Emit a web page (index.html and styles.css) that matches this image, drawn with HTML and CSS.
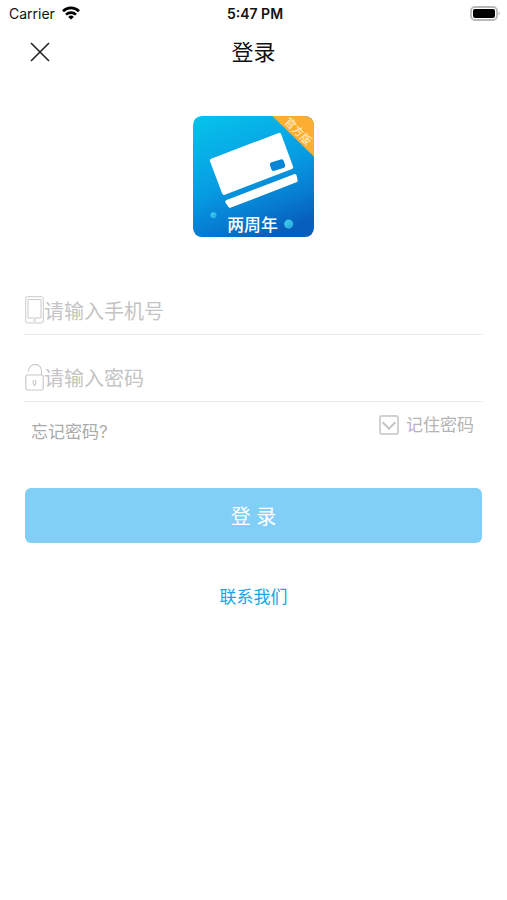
FILE: index.html
```html
<!DOCTYPE html>
<html lang="zh-CN">
<head>
<meta charset="utf-8">
<meta name="viewport" content="width=device-width, initial-scale=1">
<title>登录</title>
<link rel="stylesheet" href="styles.css">
</head>
<body>
<div class="status">
  <div class="carrier">
    <span>Carrier</span>
    <svg width="18" height="14" viewBox="0 0 18 14" aria-hidden="true">
      <g fill="none" stroke="#000" stroke-width="2.6">
        <path d="M1 5.2a11.4 11.4 0 0 1 16 0"/>
        <path d="M4 8.6a7.2 7.2 0 0 1 10 0"/>
      </g>
      <path d="M9 13.6 6.2 10.9a4 4 0 0 1 5.6 0z"/>
    </svg>
  </div>
  <span class="clock">5:47 PM</span>
  <svg class="battery" width="31" height="15" viewBox="0 0 31 15" aria-hidden="true">
    <rect x="1" y="1" width="26" height="13" rx="4" fill="#fff" stroke="#b8b8b8" stroke-width="1.8"/>
    <rect x="3" y="3" width="22" height="9" rx="2"/>
    <path d="M28.6 5.5q2 2 0 4z" fill="#a0a0a0"/>
  </svg>
</div>
<header class="nav">
  <button class="close" type="button" aria-label="关闭">
    <svg width="20" height="20" viewBox="0 0 20 20" aria-hidden="true"><path d="M1 1l18 18M19 1L1 19" stroke="#222" stroke-width="1.6" fill="none"/></svg>
  </button>
  <h1>登录</h1>
</header>
<main>
  <svg class="logo" width="121" height="121" viewBox="0 0 122 122">
    <defs>
      <linearGradient id="sky" x1="0.2" y1="0" x2=".6" y2="1">
        <stop offset="0" stop-color="#06bfea"/>
        <stop offset=".5" stop-color="#079de3"/>
        <stop offset=".8" stop-color="#077bd0"/>
        <stop offset="1" stop-color="#075fbb"/>
      </linearGradient>
      <linearGradient id="drop" x1="0" y1="0" x2="1" y2="1">
        <stop offset="0" stop-color="#43d3ec"/>
        <stop offset="1" stop-color="#22a5de"/>
      </linearGradient>
      <clipPath id="tile"><rect width="122" height="122" rx="9"/></clipPath>
    </defs>
    <g clip-path="url(#tile)">
      <rect width="122" height="122" fill="url(#sky)"/>
      <path d="M80 0h42v41z" fill="#fbae32"/>
      <g fill="#fff" stroke="#fff" stroke-width="4" stroke-linejoin="round">
        <path d="M19 45 87 19 99 51.500 31.300 77.500z"/>
        <path d="M34.600 86.500 102.500 60.500 103.500 65 37.500 90.500z"/>
      </g>
      <rect x="78" y="45" width="14.5" height="9" rx="2.5" fill="#0886d6" transform="rotate(-18 85.3 49.5)"/>
      <circle cx="20.7" cy="100" r="3" fill="url(#drop)"/>
      <circle cx="96.5" cy="109" r="4.6" fill="url(#drop)"/>
      <text class="logo-text" x="60" y="116" text-anchor="middle">两周年</text>
      <text class="ribbon-text" transform="translate(106 15.5) rotate(45)" y="4" text-anchor="middle">官方版</text>
    </g>
  </svg>
  <form>
    <div class="field">
      <label for="phone" aria-label="手机号">
        <svg width="19" height="28" viewBox="0 0 19 28" fill="none" stroke="#cacaca" aria-hidden="true">
          <rect x=".7" y=".7" width="17.6" height="26.3" rx="2"/>
          <path d="M3 3.5h13v18.5H3z"/><circle cx="9.5" cy="24.4" r="1"/>
        </svg>
      </label>
      <input id="phone" type="tel" placeholder="请输入手机号">
    </div>
    <div class="field">
      <label for="password" aria-label="密码">
        <svg width="19" height="28" viewBox="0 0 19 28" fill="none" stroke="#cacaca" stroke-width="1.2" aria-hidden="true">
          <rect x=".8" y="12" width="17.4" height="15" rx="1.5"/>
          <path d="M3.2 8.5C4.5-.9 16.3-1.3 16.5 8.5V12"/>
          <path d="M9.5 22.5c-2-2.500-2-5 0-5s2 2.500 0 5z"/>
        </svg>
      </label>
      <input id="password" type="password" placeholder="请输入密码">
    </div>
    <div class="options">
      <a class="forgot" href="#forgot">忘记密码?</a>
      <label class="remember"><input type="checkbox">记住密码</label>
    </div>
    <button class="submit" type="submit">登 录</button>
  </form>
  <a class="contact" href="#contact">联系我们</a>
</main>
</body>
</html>
```
FILE: styles.css
```css
* {
  box-sizing: border-box;
}

body {
  margin: 0;
  background: #fff;
  color: #111;
  font-family: Inter, "Noto Sans CJK SC", sans-serif;
}

a {
  text-decoration: none;
}

svg {
  display: block;
}

button,
input {
  font: inherit;
}

.status {
  display: grid;
  grid-template-columns: 1fr auto 1fr;
  align-items: center;
  height: 28px;
  padding: 0 6px 2px 9px;
  font-size: 14px;
}

.carrier {
  display: flex;
  align-items: center;
  gap: 7px;
}

.clock {
  font-weight: 600;
}

.battery {
  justify-self: end;
}

.nav {
  display: grid;
  grid-template-columns: 1fr auto 1fr;
  align-items: center;
  height: 48px;
  padding: 0 30px;
}

.close {
  width: 20px;
  padding: 0;
  border: 0;
  background: none;
}

h1 {
  margin: 0;
  font-size: 22px;
  line-height: 32px;
  font-weight: 400;
}

main {
  display: flex;
  flex-direction: column;
  align-items: center;
  padding: 40px 24px 0;
}

.logo-text {
  fill: #fff;
  font-size: 17px;
  font-weight: 500;
}

.ribbon-text {
  fill: #fff3d4;
  font-size: 11px;
}

form {
  width: 100%;
  margin-top: 31px;
}

.field {
  display: flex;
  align-items: flex-end;
  height: 67px;
  padding-bottom: 10px;
  border-bottom: 1px solid #ebebeb;
}

.field label {
  margin-left: 1px;
}

.field input {
  flex: 1;
  min-width: 0;
  height: 28px;
  padding: 4px 0 0;
  border: 0;
  outline: 0;
  background: none;
  color: #333;
  font-size: 20px;
}

.field input::placeholder {
  color: #c4c4c4;
  opacity: 1;
}

.options {
  display: flex;
  justify-content: space-between;
  align-items: flex-start;
  height: 86px;
  padding: 11px 9px 0 7px;
  font-size: 17px;
  line-height: 24px;
}

.forgot {
  margin-top: 7px;
  color: #aaa;
}

.remember {
  display: flex;
  align-items: center;
  gap: 7px;
  color: #b4b4b4;
}

.remember input {
  appearance: none;
  display: grid;
  place-items: center;
  width: 20px;
  height: 20px;
  margin: 0;
  border: 2px solid #d2d2d2;
  border-radius: 3px;
}

.remember input::before {
  content: "";
  width: 8px;
  height: 8px;
  margin-bottom: 4px;
  border: solid #c4c4c4;
  border-width: 0 2px 2px 0;
  transform: rotate(45deg);
}

.submit {
  display: block;
  width: calc(100% - 2px);
  height: 55px;
  margin: 0 1px;
  padding: 0;
  border: 0;
  border-radius: 6px;
  background: #81cff7;
  color: #fff;
  font-size: 20px;
}

.contact {
  margin-top: 42px;
  color: #1aa4e4;
  font-size: 17px;
  line-height: 24px;
}
```
